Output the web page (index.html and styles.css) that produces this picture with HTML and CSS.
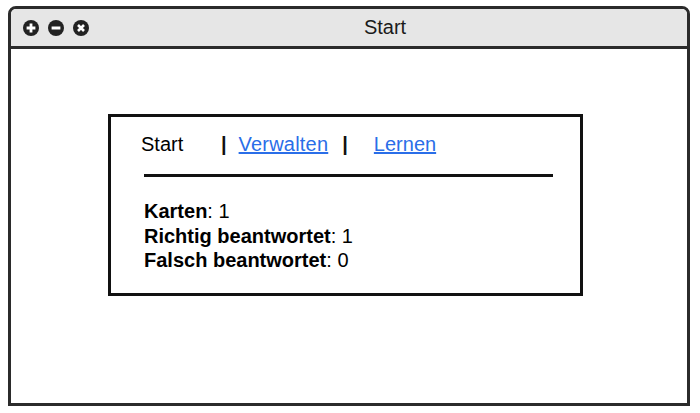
FILE: index.html
```html
<!DOCTYPE html>
<html>
<head>
<meta charset="utf-8">
<link rel="stylesheet" href="styles.css">
</head>
<body>
<div class="window">
  <div class="titlebar">
    <div class="controls">
      <svg class="ctl" viewBox="0 0 16 16" width="16" height="16"><circle cx="8" cy="8" r="8" fill="#222"/><path d="M8 3.6v8.8M3.6 8h8.8" stroke="#fff" stroke-width="2.8"/></svg>
      <svg class="ctl" viewBox="0 0 16 16" width="16" height="16"><circle cx="8" cy="8" r="8" fill="#222"/><path d="M3.6 8h8.8" stroke="#fff" stroke-width="2.8"/></svg>
      <svg class="ctl" viewBox="0 0 16 16" width="16" height="16"><circle cx="8" cy="8" r="8" fill="#222"/><path d="M5 5l6 6M11 5l-6 6" stroke="#fff" stroke-width="2.6"/></svg>
    </div>
    <div class="title">Start</div>
  </div>
  <div class="content">
    <div class="panel">
      <nav class="nav">
        <span class="current">Start</span>
        <span class="sep">|</span>
        <a class="link verwalten" href="#">Verwalten</a>
        <span class="sep sep2">|</span>
        <a class="link lernen" href="#">Lernen</a>
      </nav>
      <div class="rule"></div>
      <div class="stats">
        <div><b>Karten</b>: 1</div>
        <div><b>Richtig beantwortet</b>: 1</div>
        <div><b>Falsch beantwortet</b>: 0</div>
      </div>
    </div>
  </div>
</div>
</body>
</html>
```

FILE: styles.css
```css
html, body {
  margin: 0;
  padding: 0;
  background: #fff;
}
body {
  font-family: "Liberation Sans", Arial, sans-serif;
  color: #000;
}
.window {
  margin: 6px 0 0 8px;
  width: 682px;
  height: 400px;
  box-sizing: border-box;
  border: 3px solid #2b2b2b;
  border-radius: 8px 8px 0 0;
  overflow: hidden;
  display: flex;
  flex-direction: column;
}
.titlebar {
  height: 37px;
  flex: none;
  background: #e6e6e6;
  border-bottom: 3px solid #2b2b2b;
  display: flex;
  align-items: center;
}
.controls {
  display: flex;
  gap: 9px;
  padding-left: 12px;
  width: 66px;
}
.ctl {
  display: block;
}
.title {
  flex: 1;
  text-align: center;
  font-size: 20px;
  color: #1a1a1a;
  padding-right: 6px;
}
.content {
  flex: 1;
  background: #fff;
  padding: 65px 0 0 97px;
}
.panel {
  width: 475px;
  box-sizing: border-box;
  border: 3px solid #111;
  padding: 16px 30px 20px 33px;
}
.nav {
  display: flex;
  align-items: baseline;
  font-size: 20px;
  line-height: 23px;
}
.current {
  margin-left: -3px;
  width: 80px;
}
.sep {
  font-weight: bold;
  color: #111;
}
.verwalten {
  margin-left: 12px;
  letter-spacing: 0.2px;
}
.sep2 {
  margin-left: 14px;
}
.lernen {
  margin-left: 26px;
}
.link {
  color: #2a6ee8;
  text-decoration: underline;
}
.rule {
  margin-top: 18px;
  height: 3px;
  width: 409px;
  background: #111;
}
.stats {
  margin-top: 22px;
  font-size: 20px;
  line-height: 24.5px;
}
.stats b {
  font-weight: bold;
}
```
